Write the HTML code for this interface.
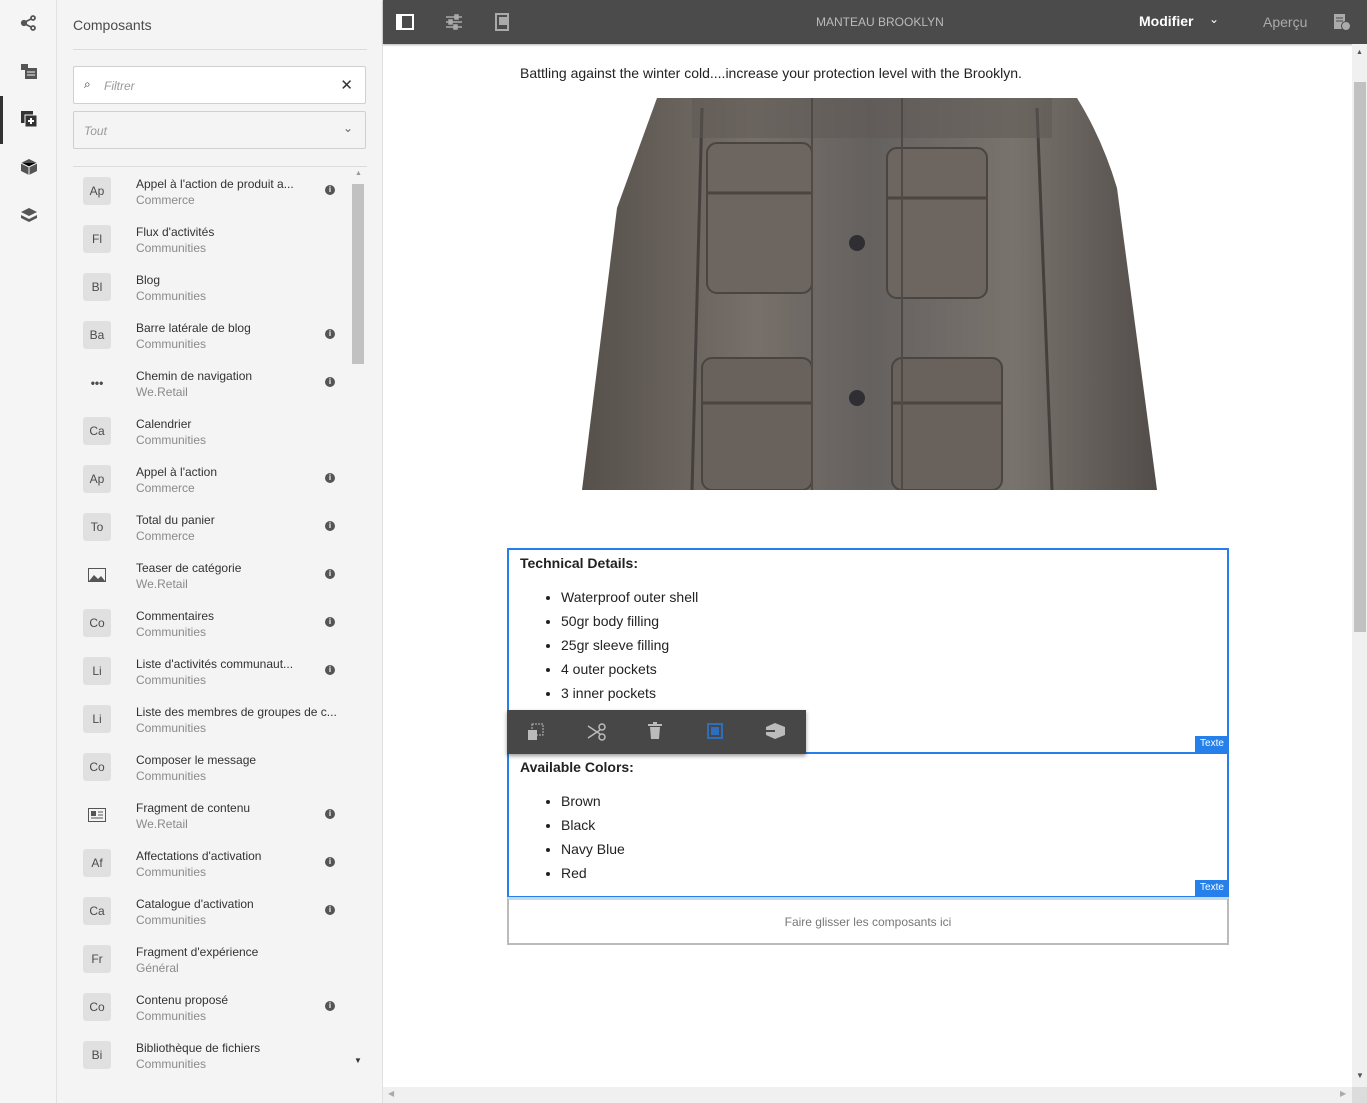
<!DOCTYPE html>
<html><head><meta charset="utf-8"><style>
*{box-sizing:border-box;margin:0;padding:0}
body{width:1367px;height:1103px;overflow:hidden;font-family:"Liberation Sans",sans-serif;background:#fff;position:relative}
.rail{position:absolute;left:0;top:0;width:57px;height:1103px;background:#f5f5f5;border-right:1px solid #e1e1e1}
.rail .act{position:absolute;left:0;top:96px;width:3px;height:48px;background:#323232}
.rail svg{position:absolute;left:20px}
.panel{position:absolute;left:57px;top:0;width:326px;height:1103px;background:#f4f4f4;border-right:1px solid #e1e1e1}
.panel h1{position:absolute;left:16px;top:17px;font-size:14px;font-weight:normal;color:#4b4b4b}
.hr{position:absolute;left:16px;width:294px;height:1px;background:#dcdcdc}
.inp{position:absolute;left:16px;width:293px;height:38px;border:1px solid #d0d0d0;background:#fff;border-radius:2px;font-size:12px;font-style:italic;color:#999}
.item{position:absolute;left:26px;width:260px;height:40px}
.item .b{position:absolute;left:0;top:0;width:28px;height:28px;background:#e0e0e0;border-radius:3px;font-size:12px;color:#4b4b4b;text-align:center;line-height:28px}
.item .t{position:absolute;left:53px;top:0px;font-size:12px;color:#323232;white-space:nowrap}
.item .s{position:absolute;left:53px;top:16px;font-size:12px;color:#8a8a8a}
.item .i{position:absolute;left:242px;top:8px;width:10px;height:10px;border-radius:50%;background:#555;color:#fff;font-size:8px;font-weight:bold;text-align:center;line-height:10px}
.top{position:absolute;left:383px;top:0;width:984px;height:44px;background:#4b4b4b;box-shadow:0 1px 2px rgba(0,0,0,.3)}
.txt{font-size:14px;color:#222}
.box{position:absolute;left:507px;width:722px;border:2px solid #2680eb;background:#fff}
.box b{position:absolute;left:11px;font-size:14px;color:#222}
.box ul{position:absolute;left:52px;font-size:14px;color:#222;line-height:24px}
.tag{position:absolute;right:-2px;width:34px;height:16px;background:#2680eb;color:#fff;font-size:10px;text-align:center;line-height:16px}
</style></head><body>
<div class="rail">
<svg style="top:14px" width="18" height="18" viewBox="0 0 18 18" fill="none" stroke="#555" stroke-width="1.8"><circle cx="4" cy="9" r="2.2" fill="#555"/><circle cx="13" cy="4" r="2"/><circle cx="13" cy="14" r="2"/><path d="M5 8l6-3M5 10l6 3"/></svg>
<svg style="top:62px" width="18" height="18" viewBox="0 0 18 18"><rect x="1" y="2" width="7" height="6" fill="#555"/><rect x="5" y="6" width="12" height="11" fill="#555"/><path d="M7 10h8M7 13h8" stroke="#f5f5f5"/></svg>
<div class="act"></div>
<svg style="top:110px" width="18" height="18" viewBox="0 0 18 18"><rect x="1" y="1" width="12" height="12" fill="#333"/><rect x="5" y="5" width="12" height="12" fill="#333" stroke="#f5f5f5"/><path d="M11 8v6M8 11h6" stroke="#fff" stroke-width="2"/></svg>
<svg style="top:158px" width="18" height="18" viewBox="0 0 18 18"><path d="M9 1l8 4v8l-8 4-8-4V5z" fill="#555"/><path d="M1 5l8 4 8-4M9 9v8" stroke="#f5f5f5"/></svg>
<svg style="top:206px" width="18" height="18" viewBox="0 0 18 18"><path d="M9 2l8 4-8 4-8-4z" fill="#555"/><path d="M1 9l8 4 8-4v3l-8 4-8-4z" fill="#555"/></svg>
</div>
<div class="panel">
<h1>Composants</h1>
<div class="hr" style="top:49px"></div>
<div class="inp" style="top:66px"><span style="position:absolute;left:10px;top:10px;font-style:normal;color:#333">&#x2315;</span><span style="position:absolute;left:30px;top:12px">Filtrer</span><span style="position:absolute;right:12px;top:9px;font-style:normal;color:#333;font-size:15px">✕</span></div>
<div class="inp" style="top:111px;background:#f4f4f4"><span style="position:absolute;left:10px;top:12px">Tout</span><span style="position:absolute;right:12px;top:9px;font-style:normal;color:#666">⌄</span></div>
<div class="hr" style="top:166px"></div>
<div style="position:absolute;left:295px;top:170px;width:12px;height:900px"><div style="position:absolute;top:0;left:3px;font-size:7px;color:#999">▲</div><div style="position:absolute;top:14px;left:0;width:12px;height:180px;background:#c1c1c1"></div><div style="position:absolute;top:886px;left:2px;font-size:8px;color:#333">▼</div></div>
<div id="list"></div>
</div>
<div class="top">
<svg style="position:absolute;left:13px;top:14px" width="18" height="16"><rect x="1" y="1" width="16" height="14" fill="none" stroke="#fff" stroke-width="2"/><rect x="1" y="1" width="5" height="14" fill="#fff"/></svg>
<svg style="position:absolute;left:62px;top:13px" width="18" height="18" stroke="#aaa" stroke-width="1.5"><path d="M1 4h16M1 9h16M1 14h16"/><rect x="10" y="2" width="3" height="4" fill="#aaa"/><rect x="4" y="7" width="3" height="4" fill="#aaa"/><rect x="9" y="12" width="3" height="4" fill="#aaa"/></svg>
<svg style="position:absolute;left:112px;top:13px" width="16" height="18"><rect x="1" y="1" width="12" height="16" fill="none" stroke="#aaa" stroke-width="2"/><rect x="4" y="4" width="10" height="8" fill="#aaa"/></svg>
<div style="position:absolute;left:433px;top:15px;font-size:12px;color:#bbb">MANTEAU BROOKLYN</div>
<div style="position:absolute;left:756px;top:13px;font-size:14px;font-weight:bold;color:#fff">Modifier</div>
<div style="position:absolute;left:826px;top:12px;font-size:12px;color:#fff">⌄</div>
<div style="position:absolute;left:880px;top:14px;font-size:14px;color:#aaa">Aperçu</div>
<svg style="position:absolute;left:950px;top:13px" width="18" height="18"><rect x="1" y="1" width="11" height="15" fill="#aaa"/><path d="M3 5h7M3 8h7" stroke="#4b4b4b"/><circle cx="13" cy="13" r="4.5" fill="#aaa" stroke="#4b4b4b"/></svg>
</div>
<div class="txt" style="position:absolute;left:520px;top:65px">Battling against the winter cold....increase your protection level with the Brooklyn.</div>
<svg style="position:absolute;left:582px;top:98px" width="575" height="392" viewBox="0 0 575 392">
<defs><linearGradient id="g" x1="0" x2="1"><stop offset="0" stop-color="#56504b"/><stop offset=".3" stop-color="#77706a"/><stop offset=".5" stop-color="#65615f"/><stop offset=".75" stop-color="#79736d"/><stop offset="1" stop-color="#524d4a"/></linearGradient></defs>
<path d="M75 0H495Q520 40 535 90L575 392H0L35 110Z" fill="url(#g)"/>
<path d="M120 10L110 392M455 10L470 392" stroke="#45403d" stroke-width="3" fill="none"/>
<path d="M110 0H470V40H110Z" fill="#5d5753" opacity=".5"/>
<rect x="125" y="45" width="105" height="150" rx="10" fill="#6c6560" stroke="#4a4541" stroke-width="2"/>
<rect x="305" y="50" width="100" height="150" rx="10" fill="#6c6560" stroke="#4a4541" stroke-width="2"/>
<rect x="120" y="260" width="110" height="132" rx="10" fill="#68615c" stroke="#4a4541" stroke-width="2"/>
<rect x="310" y="260" width="110" height="132" rx="10" fill="#68615c" stroke="#4a4541" stroke-width="2"/>
<path d="M125 95h105M305 100h100M120 305h110M310 305h110" stroke="#4a4541" stroke-width="3"/>
<path d="M230 0V392M320 0V392" stroke="#4f4a46" stroke-width="2"/>
<circle cx="275" cy="145" r="8" fill="#2e2e33"/><circle cx="275" cy="300" r="8" fill="#2e2e33"/>
</svg>
<div class="box" style="top:548px;height:206px">
<b style="top:5px">Technical Details:</b>
<ul style="top:35px"><li>Waterproof outer shell</li><li>50gr body filling</li><li>25gr sleeve filling</li><li>4 outer pockets</li><li>3 inner pockets</li></ul>
<div class="tag" style="bottom:0">Texte</div>
</div>
<div class="box" style="top:752px;height:146px">
<b style="top:5px">Available Colors:</b>
<ul style="top:35px"><li>Brown</li><li>Black</li><li>Navy Blue</li><li>Red</li></ul>
<div class="tag" style="bottom:0">Texte</div>
</div>
<div style="position:absolute;left:507px;top:897px;width:722px;height:48px;border:2px solid #bbb;border-top:3px solid #c4d8ef;font-size:12px;color:#777;text-align:center;line-height:44px">Faire glisser les composants ici</div>
<div style="position:absolute;left:507px;top:710px;width:299px;height:44px;background:#474747;box-shadow:0 2px 4px rgba(0,0,0,.4)">
<svg style="position:absolute;left:20px;top:13px" width="18" height="18"><rect x="5" y="1" width="11" height="11" fill="none" stroke="#bbb" stroke-dasharray="2 1"/><rect x="1" y="7" width="9" height="10" fill="#bbb"/></svg>
<svg style="position:absolute;left:80px;top:13px" width="20" height="18" stroke="#bbb" stroke-width="1.5" fill="none"><circle cx="15" cy="4" r="3"/><circle cx="15" cy="14" r="3"/><path d="M1 3l12 8M1 15l12-8"/></svg>
<svg style="position:absolute;left:140px;top:12px" width="16" height="18"><rect x="1" y="2" width="14" height="2" fill="#bbb"/><rect x="6" y="0" width="4" height="2" fill="#bbb"/><path d="M3 5h10l-1 12H4z" fill="#bbb"/></svg>
<svg style="position:absolute;left:199px;top:12px" width="18" height="18"><rect x="2" y="2" width="14" height="14" fill="none" stroke="#2d6fbd" stroke-width="2"/><rect x="5" y="5" width="8" height="8" fill="#2d6fbd"/></svg>
<svg style="position:absolute;left:259px;top:12px" width="20" height="18"><path d="M9 1l10 4v8l-10 4-9-4V5z" fill="#bbb"/><path d="M0 9h9" stroke="#474747" stroke-width="2"/></svg>
</div>
<div style="position:absolute;left:1352px;top:44px;width:15px;height:1043px;background:#f0f0f0"><div style="position:absolute;left:4px;top:5px;font-size:7px;color:#555">▲</div><div style="position:absolute;left:2px;top:38px;width:12px;height:550px;background:#c1c1c1"></div><div style="position:absolute;left:4px;top:1027px;font-size:8px;color:#555">▼</div></div>
<div style="position:absolute;left:383px;top:1087px;width:984px;height:16px;background:#f0f0f0"><div style="position:absolute;left:5px;top:2px;font-size:8px;color:#aaa">◀</div><div style="position:absolute;left:957px;top:2px;font-size:8px;color:#aaa">▶</div><div style="position:absolute;right:0;top:0;width:15px;height:16px;background:#dcdcdc"></div></div>
<script>
var d=[["Ap","Appel à l'action de produit a...","Commerce",1],["Fl","Flux d'activités","Communities",0],["Bl","Blog","Communities",0],["Ba","Barre latérale de blog","Communities",1],["•••","Chemin de navigation","We.Retail",1],["Ca","Calendrier","Communities",0],["Ap","Appel à l'action","Commerce",1],["To","Total du panier","Commerce",1],["img","Teaser de catégorie","We.Retail",1],["Co","Commentaires","Communities",1],["Li","Liste d'activités communaut...","Communities",1],["Li","Liste des membres de groupes de c...","Communities",0],["Co","Composer le message","Communities",0],["frag","Fragment de contenu","We.Retail",1],["Af","Affectations d'activation","Communities",1],["Ca","Catalogue d'activation","Communities",1],["Fr","Fragment d'expérience","Général",0],["Co","Contenu proposé","Communities",1],["Bi","Bibliothèque de fichiers","Communities",0]];
var h="";d.forEach(function(x,i){var y=177+i*48;var b;
if(x[0]=="•••")b='<div class="b" style="background:none;font-weight:bold">•••</div>';
else if(x[0]=="img")b='<div class="b" style="background:none"><svg width="18" height="14" style="margin-top:7px"><rect x="0.5" y="0.5" width="17" height="13" fill="none" stroke="#555"/><path d="M1 13l5-6 4 4 3-3 4 5z" fill="#555"/></svg></div>';
else if(x[0]=="frag")b='<div class="b" style="background:none"><svg width="18" height="14" style="margin-top:7px"><rect x="0.5" y="0.5" width="17" height="13" fill="none" stroke="#555"/><rect x="3" y="3" width="5" height="5" fill="#555"/><path d="M10 4h5M10 7h5M3 10h12" stroke="#555"/></svg></div>';
else b='<div class="b">'+x[0]+'</div>';
h+='<div class="item" style="top:'+y+'px">'+b+'<div class="t">'+x[1]+'</div><div class="s">'+x[2]+'</div>'+(x[3]?'<div class="i">i</div>':'')+'</div>';});
document.getElementById("list").innerHTML=h;
</script>
</body></html>
